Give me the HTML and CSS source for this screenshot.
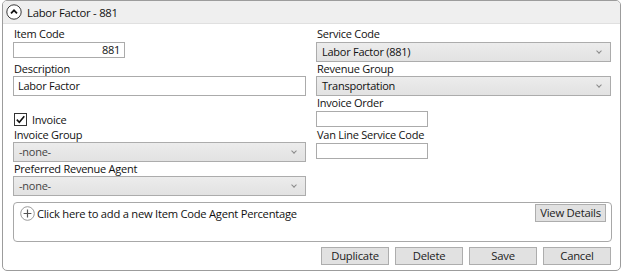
FILE: index.html
```html
<!DOCTYPE html>
<html lang="en">
<head>
    <meta charset="UTF-8">
    <title>Labor Factor - 881</title>
    <link rel="stylesheet" href="styles.css">
</head>
<body>
    <section class="panel">
        <header class="panel-head">
            <span class="collapse">
                <svg width="16" height="16" viewBox="0 0 16 16"><circle cx="8" cy="8" r="7.2" fill="#fff" stroke="#3a3a3a" stroke-width="1"/><path d="M5 9.3 L8 6.3 L11 9.3" fill="none" stroke="#111" stroke-width="1.7"/></svg>
            </span>
            <span>Labor Factor - 881</span>
        </header>
        <div class="form">
            <div class="col">
                <label class="lbl first">Item Code</label>
                <div class="input short num">881</div>
                <label class="lbl gap4">Description</label>
                <div class="input tall">Labor Factor</div>
                <div class="check">
                    <span class="box">
                        <svg width="11" height="11" viewBox="0 0 11 11"><path d="M1.8 5.6 L4.3 8.2 L9.3 2.2" fill="none" stroke="#111" stroke-width="1.6"/></svg>
                    </span>
                    <span>Invoice</span>
                </div>
                <label class="lbl gap2">Invoice Group</label>
                <div class="select muted">-none-<span class="arrow"></span></div>
                <label class="lbl">Preferred Revenue Agent</label>
                <div class="select muted">-none-<span class="arrow"></span></div>
            </div>
            <div class="col">
                <label class="lbl first">Service Code</label>
                <div class="select">Labor Factor (881)<span class="arrow"></span></div>
                <label class="lbl">Revenue Group</label>
                <div class="select">Transportation<span class="arrow"></span></div>
                <label class="lbl">Invoice Order</label>
                <div class="input short">&nbsp;</div>
                <label class="lbl gap1">Van Line Service Code</label>
                <div class="input short">&nbsp;</div>
            </div>
        </div>
        <div class="agents">
            <div class="agents-row">
                <span class="plus">
                    <svg width="15" height="15" viewBox="0 0 15 15"><circle cx="7.5" cy="7.5" r="6.8" fill="#fff" stroke="#9a9a9a" stroke-width="1"/><path d="M7.5 3.6 V11.4 M3.6 7.5 H11.4" stroke="#555" stroke-width="1.2"/></svg>
                </span>
                <span class="add-text">Click here to add a new Item Code Agent Percentage</span>
                <button class="btn details">View Details</button>
            </div>
        </div>
        <div class="actions">
            <button class="btn">Duplicate</button>
            <button class="btn">Delete</button>
            <button class="btn">Save</button>
            <button class="btn">Cancel</button>
        </div>
    </section>
</body>
</html>
```

FILE: styles.css
```css
body {
    margin: 0;
    padding: 0 3px 0 2px;
    font-family: 'Open Sans', 'Noto Sans', sans-serif;
    font-size: 11px;
    letter-spacing: -0.25px;
    color: #111;
    background: #fff;
}

.panel {
    width: 617px;
    height: 269px;
    border: 1px solid #9c9c9c;
    border-radius: 5px;
    overflow: hidden;
}

.panel-head {
    height: 22px;
    background: #efefef;
    border-bottom: 1px solid #e0e0e0;
    display: flex;
    align-items: center;
    gap: 5px;
    padding-left: 3px;
    font-size: 11.3px;
}

.collapse {
    display: flex;
}

.form {
    display: grid;
    grid-template-columns: 293px 295px;
    gap: 10px;
    padding: 0 0 0 10px;
}

.col {
    display: flex;
    flex-direction: column;
}

.lbl {
    display: block;
    height: 14px;
    line-height: 14px;
    padding-left: 1px;
}

.lbl.first {
    margin-top: 3px;
}

.lbl.gap1 {
    margin-top: 1px;
}

.lbl.gap2 {
    margin-top: 2px;
}

.lbl.gap4 {
    margin-top: 4px;
}

.input {
    height: 14px;
    line-height: 14px;
    border: 1px solid #ababab;
    background: #fff;
    padding: 0 4px;
    margin-top: 1px;
}

.input.short {
    width: 102px;
}

.input.num {
    text-align: right;
}

.input.tall {
    height: 18px;
    line-height: 18px;
    margin-top: 0;
}

.select {
    position: relative;
    height: 18px;
    line-height: 18px;
    border: 1px solid #acacac;
    background: linear-gradient(#ececec, #e2e2e2);
    padding: 0 5px;
}

.lbl.first + .select {
    margin-top: 1px;
}

.select.muted {
    color: #444;
}

.arrow {
    position: absolute;
    right: 9px;
    top: 6px;
    width: 3px;
    height: 3px;
    border-right: 1px solid #8a8a8a;
    border-bottom: 1px solid #8a8a8a;
    transform: rotate(45deg);
}

.check {
    display: flex;
    align-items: center;
    gap: 5px;
    margin: 17px 0 0 1px;
    height: 13px;
}

.box {
    width: 11px;
    height: 11px;
    border: 1px solid #333;
    display: flex;
    background: #fff;
}

.agents {
    margin: 6px 8px 0 10px;
    height: 38px;
    border: 1px solid #a8a8a8;
    border-radius: 4px;
}

.agents-row {
    display: flex;
    align-items: center;
    height: 18px;
    padding: 1px 5px 0 6px;
}

.plus {
    display: flex;
    margin-right: 2px;
}

.add-text {
    flex: 1;
    font-size: 11.2px;
}

.btn {
    font-family: 'Open Sans', 'Noto Sans', sans-serif;
    font-size: 11.3px;
    letter-spacing: -0.25px;
    color: #222;
    background: #e1e1e1;
    border: 1px solid #adadad;
    padding: 0;
    height: 18px;
    line-height: 16px;
}

.details {
    width: 71px;
}

.actions {
    display: flex;
    justify-content: flex-end;
    gap: 6px;
    margin: 5px 9px 0 0;
}

.actions .btn {
    width: 68px;
}
```
